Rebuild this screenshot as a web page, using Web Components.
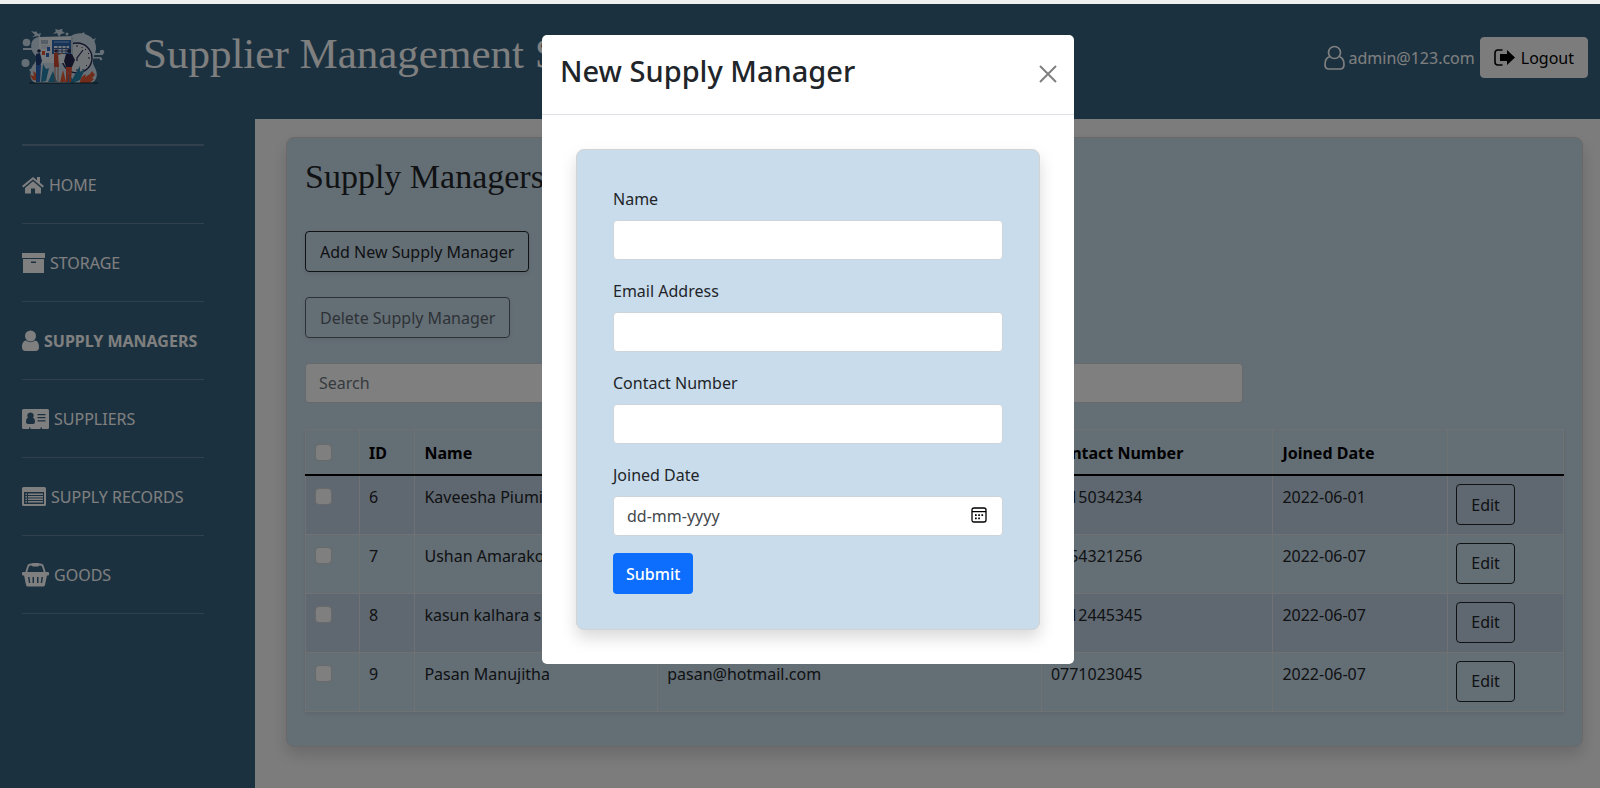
<!DOCTYPE html>
<html lang="en">
<head>
<meta charset="utf-8">
<title>Supplier Management System</title>
<style>
  html, body { margin: 0; height: 100%; }
  body {
    --brand: #366280; --panel: #c9dceb; --line: #dee2e6; --ink: #212529;
    font: 16px/24px "Noto Sans", "Open Sans", sans-serif;
    color: var(--ink); background: #f9f9fb;
  }
</style>
</head>
<body>
<supply-app></supply-app>

<script>
const define = (name, html, setup) => {
  const template = document.createElement('template');
  template.innerHTML = html;
  customElements.define(name, class extends HTMLElement {
    constructor() {
      super();
      this.attachShadow({ mode: 'open' }).append(template.content.cloneNode(true));
    }
    connectedCallback() { if (setup) setup(this, this.shadowRoot); }
  });
};

const ICONS = {
  home: [22, 18, '<path d="M11 1 0 10l1.400 1.600L11 3.600l9.600 8L22 10l-4-3.300V1h-3v3.200z"/><path d="M11 5.200 3 12v5.500h6V12.500h4v5h6V12z"/>'],
  box: [23, 22, '<path d="M0 1h23v5H0z"/><path fill-rule="evenodd" d="M1 7h21v14H1zM9 9.500h5v1.600H9z"/>'],
  person: [17, 21, '<circle cx="8.500" cy="6" r="5.500"/><path d="M4 10.500C1 11 0 14 0 17q0 4 3.500 4h10q3.500 0 3.500-4c0-3-1-6-4-6.500a6.500 6.500 0 0 1-9 0z"/>'],
  card: [27, 20, '<path fill-rule="evenodd" d="M1.500 0h24Q27 0 27 1.500v17q0 1.500-1.500 1.500H20v-1.500h-1.500V20h-10v-1.500H7V20H1.500Q0 20 0 18.500v-17Q0 0 1.500 0zM8.500 3.500a3.200 3.200 0 0 0-2.500 5.300C4.500 9.300 4 11 4 13q0 2 2 2h5q2 0 2-2c0-2-.5-3.700-2-4.200a3.200 3.200 0 0 0-2.500-5.300zM15.500 5v1.200h8V5zm0 3v1.200h8V8zm0 3.200v1.200h8v-1.200z"/>'],
  list: [24, 19, '<path fill-rule="evenodd" d="M1.500 0h21Q24 0 24 1.500v16q0 1.500-1.500 1.500h-21Q0 19 0 17.500v-16Q0 0 1.500 0zM2 5v12h20V5z"/><path d="M3.500 6.500H5V8H3.500zM6 6.500h15V8H6zM3.500 9H5v1.500H3.500zM6 9h15v1.500H6zM3.500 11.500H5V13H3.500zM6 11.500h15V13H6zM3.500 14H5v1.500H3.500zM6 14h15v1.500H6z"/>'],
  basket: [27, 25, '<path d="M4 11 6 4.500Q6.500 2.500 9 2.500h9q2.500 0 3 2L23 11" fill="none" stroke="currentColor" stroke-width="1.800"/><rect x="9.500" y="1" width="8" height="3.500" rx="1.700"/><rect y="10" width="27" height="3.500" rx="1"/><path fill-rule="evenodd" d="M2 13h23l-2 10q-.4 1.500-2 1.500H6Q4.400 24.500 4 23zM6 15l.9 6h1.400L7.500 15zm4.500 0v6H12v-6zm4.500 0v6h1.500v-6zm4.500 0-.8 6h1.400l.9-6z"/>'],
  user: [21, 25, '<g fill="none" stroke="currentColor" stroke-width="1.700"><circle cx="10.500" cy="7.500" r="6"/><path d="M5.800 11.500C2.500 12.500 1 16 1 19.500Q1 24 5 24h11q4 0 4-4.500c0-3.500-1.500-7-4.800-8"/></g>'],
  logout: [21, 17, '<path d="M8.500 1H4Q1 1 1 4v9q0 3 3 3h4.500" fill="none" stroke="currentColor" stroke-width="1.600"/><path d="M6 5h7V1l8 7.500-8 7.500v-4H6z"/>'],
  close: [18, 18, '<path d="m1 1 16 16M17 1 1 17" fill="none" stroke="currentColor" stroke-width="2"/>'],
  calendar: [16, 16, '<path d="M1 3q0-2 2-2h10q2 0 2 2v10q0 2-2 2H3q-2 0-2-2zM1 4.700h14" fill="none" stroke="currentColor" stroke-width="1.300"/><path d="M4 7.300h1.700V9H4zM7.200 7.300h1.700V9H7.200zM10.400 7.300h1.700V9h-1.700zM4 10.600h1.700v1.700H4zM7.200 10.600h1.700v1.700H7.200z"/>']
};

define('ui-icon', '<style>:host{display:inline-flex;flex:none}svg{display:block;fill:currentColor}</style><span></span>', (host, root) => {
  const [w, h, shape] = ICONS[host.getAttribute('name')];
  root.querySelector('span').innerHTML = `<svg width="${w}" height="${h}" viewBox="0 0 ${w} ${h}" aria-hidden="true">${shape}</svg>`;
});

define('brand-logo', `
<style>:host{display:block}svg{display:block}</style>
<svg width="84" height="56" viewBox="0 0 84 56" role="img" aria-label="Supply planning team">
  <g fill="#cfdfec">
    <path d="M10 42C10 36 15 35 16 28C8 22 8 9 18 8L50 7C60 0 76 7 75 20C74 27 70 31 73 37C78 45 76 52 70 54L14 54C9 51 9 46 10 42Z"/>
    <circle cx="5.500" cy="13.500" r="3.800"/><circle cx="4.500" cy="34" r="4"/><circle cx="81" cy="23" r="2.300"/><circle cx="80" cy="30" r="1.300"/><circle cx="46" cy="5" r="1.500"/><circle cx="10" cy="41" r="1.600"/>
    <path d="M2 19h13v2H2zM70 24h12v2H70zM72 28h8v1.500h-8zM55 9l8-6 1 3zM66 13l9-4-3 6z"/>
    <path d="m20 10-3-3-6 1 3-2-4-4 4 1 1-1 2 3 3-1-1 3zM38 8l-2-4-4 1 3-3-1-2 4 1 4-2-1 3 3 2-4 1z"/>
  </g>
  <circle cx="56" cy="29" r="15" fill="#e2e9ee" stroke="#272a56" stroke-width="1.400"/>
  <g stroke="#272a56" fill="none"><path d="m62 21-6 8v3" stroke-width="1.200"/><path d="M56 16v2M67 29h2M65 20l-1 1M66 37l-1-1M56 40v2M61 18v1M68 24l-1 1M62 40v1"/></g>
  <rect x="18" y="8" width="34" height="26" fill="#edf2f6"/>
  <path d="M52 8v26h-2V8z" fill="#b8cad9"/>
  <rect x="20" y="11" width="7" height="4" fill="#aabdce"/><path d="M20 17h8M20 19h6" stroke="#c2d0db"/>
  <rect x="31" y="11" width="19" height="14" fill="#3166b0"/><path d="M33 13h15" stroke="#91c0ef"/>
  <path d="M33 17h15v7H33z" fill="#e4f0fa"/><path d="M37 17v7M41 17v7M45 17v7M33 19.500h15M33 22h15" stroke="#3e5c93"/>
  <path d="M26 18h3v4h-3zM25 24h3v4h-3z" fill="#3166c4"/><path d="M21 22h3v4h-3z" fill="#e25332"/>
  <g fill="#e35a35"><path d="m12 51-3-5 4 1-1-5 4 3 1-4 2 11zM59 54c0-5 2-7 6-9l-1 3 5-3 2-3 3 4-3 3 2 1-4 4z"/><path d="m39 53 3-12 3 12z"/></g>
  <g fill="#2682aa"><path d="m20 53 2-18 3 5 3-1-3 13zM27 53l5-11 4 11zM49 54l7-12 3-5v6l5-3-5 11-7 3z"/><path d="m46 54 1-10 5 7z"/></g>
  <g><circle cx="18" cy="22" r="1.800" fill="#252853"/><path d="m15 25 4-1 2 8-2 5h-4z" fill="#203f76"/><path d="M15 36h5l-1 17h-4z" fill="#2864b5"/></g>
  <g><circle cx="35" cy="22" r="1.700" fill="#452d49"/><path d="M33 24h4l1 14h-5z" fill="#cc4a32"/><path d="m36 26 6-2M34 38v15M37 38v15" stroke="#b57564"/></g>
  <g><circle cx="48" cy="22" r="2" fill="#292c58"/><path d="M45 25h6l3 6-3 7h-6l-2-6z" fill="#26294f"/><path d="M45 38h6l-1 15h-2V41l-1 12h-2z" fill="#dc5139"/></g>
  <path d="M8 54h69" stroke="#152634"/>
</svg>`);

define('app-header', `
<style>
  :host { display: block; background: var(--brand); color: #fff; }
  header { display: flex; align-items: flex-start; min-height: 82px; padding: 23px 12px 10px 20px; }
  brand-logo { margin: 2px 38px 0 1px; }
  h1 { margin: 0; font: 400 43px/54px "Liberation Serif", serif; flex: 1; }
  .account { display: flex; align-items: center; gap: 5px; padding-top: 10px; }
  .user { display: flex; align-items: center; gap: 4px; color: inherit; text-decoration: none; }
  button { display: flex; align-items: center; gap: 6px; height: 41px; padding: 0 13px; border: 1px solid #f8f9fa; border-radius: 4px; background: #f8f9fa; color: #000; font: inherit; }
</style>
<header>
  <brand-logo></brand-logo>
  <h1>Supplier Management System</h1>
  <div class="account">
    <a class="user" href="#account"><ui-icon name="user"></ui-icon>admin@123.com</a>
    <button type="button"><ui-icon name="logout"></ui-icon>Logout</button>
  </div>
</header>`);

define('nav-item', `
<style>
  :host { display: block; border-bottom: 1px solid #61839b; }
  a { display: flex; align-items: center; gap: 5px; height: 77px; color: #fff; text-decoration: none; white-space: nowrap; }
  :host([active]) a { font-weight: 700; }
</style>
<a href="#"><slot></slot></a>`, (host, root) => {
  const icon = document.createElement('ui-icon');
  icon.setAttribute('name', host.getAttribute('icon'));
  root.querySelector('a').prepend(icon);
});

define('app-sidebar', `
<style>
  :host { display: block; background: var(--brand); }
  nav { margin: 25px 51px 0 22px; border-top: 2px solid #61839b; }
</style>
<nav aria-label="Main">
  <nav-item icon="home">HOME</nav-item>
  <nav-item icon="box">STORAGE</nav-item>
  <nav-item icon="person" active>SUPPLY MANAGERS</nav-item>
  <nav-item icon="card">SUPPLIERS</nav-item>
  <nav-item icon="list">SUPPLY RECORDS</nav-item>
  <nav-item icon="basket">GOODS</nav-item>
</nav>`);

define('outline-button', `
<style>
  :host { display: inline-block; }
  button { display: block; height: 41px; padding: 0 14px; border: 1px solid var(--ink); border-radius: 4px; background: none; color: var(--ink); font: inherit; white-space: nowrap; }
  :host([disabled]) button { opacity: .65; }
  :host([raised]) button { box-shadow: 0 2px 4px rgba(0,0,0,.075); }
</style>
<button type="button"><slot></slot></button>`, (host, root) => {
  root.querySelector('button').disabled = host.hasAttribute('disabled');
});

const managers = [
  ['6', 'Kaveesha Piumi', '', '0715034234', '2022-06-01'],
  ['7', 'Ushan Amarakoon', '', '0754321256', '2022-06-07'],
  ['8', 'kasun kalhara silva', '', '0712445345', '2022-06-07'],
  ['9', 'Pasan Manujitha', 'pasan@hotmail.com', '0771023045', '2022-06-07']
];

define('manager-table', `
<style>
  :host { display: block; }
  table { width: 100%; table-layout: fixed; border-collapse: collapse; box-shadow: 0 2px 4px rgba(0,0,0,.075); }
  th, td { border: 1px solid var(--line); text-align: left; vertical-align: top; white-space: nowrap; overflow: hidden; }
  th { height: 24px; padding: 11px 9px 9px; color: #000; font-weight: 700; }
  thead { border-bottom: 2px solid #000; }
  tbody tr { height: 59px; }
  td { padding: 9px 9px 0; }
  td:last-child { padding: 8px 8px 0; }
  tbody tr:nth-child(odd) { background: rgba(20,0,20,.05); }
  input { appearance: none; display: block; width: 17px; height: 17px; margin: 3px 0 0; border: 1px solid #d0d2d4; border-radius: 4px; background: #fff; }
</style>
<table>
  <colgroup><col style="width:4.3%"><col style="width:4.4%"><col style="width:19.3%"><col style="width:30.5%"><col style="width:18.4%"><col style="width:13.9%"><col></colgroup>
  <thead><tr><th><input type="checkbox" aria-label="Select all"></th><th>ID</th><th>Name</th><th>Email Address</th><th>Contact Number</th><th>Joined Date</th><th></th></tr></thead>
  <tbody></tbody>
</table>`, (host, root) => {
  root.querySelector('tbody').innerHTML = managers.map(row =>
    `<tr><td><input type="checkbox" aria-label="Select ${row[1]}"></td>${row.map(v => `<td>${v}</td>`).join('')}<td><outline-button>Edit</outline-button></td></tr>`).join('');
});

define('manager-panel', `
<style>
  :host { display: block; }
  section { display: flex; flex-direction: column; align-items: flex-start; padding: 18px 18px 34px; border: 1px solid #d6d3d0; border-radius: 8px; background: var(--panel); box-shadow: 0 8px 16px rgba(0,0,0,.15); }
  h2 { margin: 0 0 33px; font: 400 34px/42px "Liberation Serif", serif; }
  outline-button { margin-bottom: 25px; }
  input { box-sizing: border-box; width: 74.5%; height: 40px; margin-bottom: 26px; padding: 0 13px; border: 1px solid #ced4da; border-radius: 4px; background: #fff; font: inherit; }
  input::placeholder { color: #6c757d; opacity: 1; }
  manager-table { width: 100%; }
</style>
<section>
  <h2>Supply Managers</h2>
  <outline-button raised>Add New Supply Manager</outline-button>
  <outline-button raised disabled>Delete Supply Manager</outline-button>
  <input type="search" placeholder="Search" aria-label="Search">
  <manager-table></manager-table>
</section>`);

define('form-field', `
<style>
  :host { display: block; margin-bottom: 19px; }
  label { display: block; height: 24px; margin-bottom: 9px; }
  .box { display: flex; align-items: center; box-sizing: border-box; height: 40px; padding: 0 13px; border: 1px solid #ced4da; border-radius: 4px; background: #fff; }
  input { flex: 1; min-width: 0; border: 0; padding: 0; background: none; color: var(--ink); font: inherit; outline: 0; }
  input::placeholder { color: #43484d; opacity: 1; }
  button { display: none; border: 0; padding: 2px; background: none; color: #000; }
  :host([picker]) button { display: block; }
</style>
<label for="field"></label>
<div class="box"><input id="field"><button type="button" aria-label="Open calendar"><ui-icon name="calendar"></ui-icon></button></div>`, (host, root) => {
  root.querySelector('label').textContent = host.getAttribute('label');
  root.querySelector('input').type = host.getAttribute('type') || 'text';
  root.querySelector('input').placeholder = host.getAttribute('placeholder') || '';
});

define('modal-dialog', `
<style>
  :host { position: absolute; inset: 0; display: flex; justify-content: center; align-items: flex-start; padding: 31px 0; background: rgba(0,0,0,.5); overflow: hidden; }
  dialog { position: static; display: block; box-sizing: border-box; width: 532px; margin: 0 0 0 16px; padding: 0; border: 0; border-radius: 5px; background: #fff; color: var(--ink); }
  header { display: flex; align-items: flex-start; justify-content: space-between; padding: 16px 17px 23px 18px; border-bottom: 1px solid var(--line); }
  h2 { margin: 0; font-size: 29px; line-height: 40px; font-weight: 500; }
  header button { margin-top: 14px; padding: 0; border: 0; background: none; color: #7f7f7f; }
  .body { padding: 34px; }
</style>
<dialog open aria-labelledby="title">
  <header><h2 id="title"><slot name="title"></slot></h2><button type="button" aria-label="Close"><ui-icon name="close"></ui-icon></button></header>
  <div class="body"><slot></slot></div>
</dialog>`);

define('manager-form', `
<style>
  :host { display: block; }
  form { padding: 37px 36px 35px; border: 1px solid #d3d3d3; border-radius: 8px; background: var(--panel); box-shadow: 0 8px 16px rgba(0,0,0,.15); }
  form > button { display: block; height: 41px; padding: 0 13px; border: 0; border-radius: 4px; background: #0d6efd; color: #fff; font: inherit; font-weight: 500; margin-top: -2px; }
</style>
<form>
  <form-field label="Name"></form-field>
  <form-field label="Email Address" type="email"></form-field>
  <form-field label="Contact Number" type="tel"></form-field>
  <form-field label="Joined Date" placeholder="dd-mm-yyyy" picker></form-field>
  <button type="submit">Submit</button>
</form>`);

define('supply-app', `
<style>
  :host { display: flex; flex-direction: column; box-sizing: border-box; min-height: 100%; border-top: 4px solid #eef0f0; position: relative; overflow: hidden; }
  .shell { flex: 1; display: grid; grid-template-columns: 255px minmax(0, 1fr); }
  main { padding: 18px 17px 42px 31px; }
</style>
<app-header></app-header>
<div class="shell">
  <app-sidebar></app-sidebar>
  <main><manager-panel></manager-panel></main>
</div>
<modal-dialog><span slot="title">New Supply Manager</span><manager-form></manager-form></modal-dialog>`);
</script>
</body>
</html>
